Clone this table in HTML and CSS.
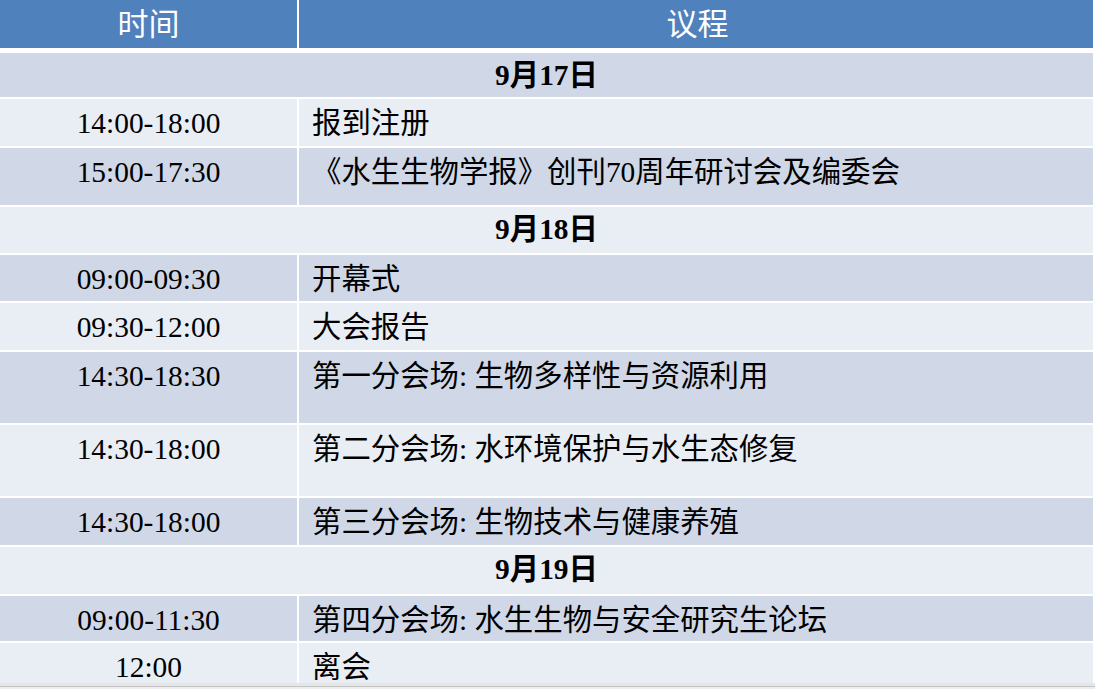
FILE: index.html
```html
<!DOCTYPE html>
<html lang="zh-CN">
<head>
<meta charset="utf-8">
<title>议程</title>
<link rel="stylesheet" href="styles.css">
</head>
<body>
<div class="agenda">
  <div class="row head">
    <div class="cell">时间</div>
    <div class="cell">议程</div>
  </div>
  <div class="row date dark h44"><div class="cell">9月17日</div></div>
  <div class="row light h47"><div class="cell time">14:00-18:00</div><div class="cell item">报到注册</div></div>
  <div class="row dark h57"><div class="cell time">15:00-17:30</div><div class="cell item">《水生生物学报》创刊70周年研讨会及编委会</div></div>
  <div class="row date light h46"><div class="cell">9月18日</div></div>
  <div class="row dark h46"><div class="cell time">09:00-09:30</div><div class="cell item">开幕式</div></div>
  <div class="row light h47"><div class="cell time">09:30-12:00</div><div class="cell item">大会报告</div></div>
  <div class="row dark h71"><div class="cell time">14:30-18:30</div><div class="cell item">第一分会场: 生物多样性与资源利用</div></div>
  <div class="row light h71"><div class="cell time">14:30-18:00</div><div class="cell item">第二分会场: 水环境保护与水生态修复</div></div>
  <div class="row dark h47"><div class="cell time">14:30-18:00</div><div class="cell item">第三分会场: 生物技术与健康养殖</div></div>
  <div class="row date light h47"><div class="cell">9月19日</div></div>
  <div class="row dark h45"><div class="cell time">09:00-11:30</div><div class="cell item">第四分会场: 水生生物与安全研究生论坛</div></div>
  <div class="row light h40"><div class="cell time">12:00</div><div class="cell item">离会</div></div>
</div>
<div class="strip"></div>
</body>
</html>
```

FILE: styles.css
```css
html, body {
  margin: 0;
  padding: 0;
  background: #ffffff;
}
body {
  width: 1095px;
  height: 689px;
  overflow: hidden;
  font-family: "Liberation Serif", "Noto Sans CJK SC", serif;
  font-size: 29.4px;
  color: #000;
}
.agenda {
  width: 1093px;
  height: 683px;
  display: flex;
  flex-direction: column;
  gap: 2px;
  overflow: hidden;
}
.row {
  display: grid;
  grid-template-columns: 297px 794px;
  column-gap: 2px;
  flex: none;
}
.row.date {
  grid-template-columns: 1093px;
}
.cell {
  line-height: 34px;
  padding-top: 6px;
  box-sizing: border-box;
  white-space: nowrap;
}
.head {
  height: 48px;
  margin-bottom: 3px;
}
.head .cell {
  background: #4f81bd;
  color: #ffffff;
  font-size: 31px;
  text-align: center;
  padding-top: 2px;
  line-height: 46px;
}
.head .cell:nth-child(2) {
  padding-left: 3px;
}
.dark .cell { background: #d0d8e8; }
.light .cell { background: #e9edf4; }
.date .cell {
  text-align: center;
  font-weight: bold;
  padding-top: 5px;
}
.time {
  text-align: center;
  padding-top: 7px;
}
.item {
  padding-left: 13px;
  padding-top: 7px;
}
.h40 { height: 40px; }
.h44 { height: 44px; }
.h45 { height: 45px; }
.h46 { height: 46px; }
.h47 { height: 47px; }
.h57 { height: 57px; }
.h71 { height: 71px; }
.strip {
  height: 6px;
  background: #e6e6e6;
  border-bottom: 2px solid #ededed;
  box-sizing: border-box;
  position: relative;
}
.strip::after {
  content: "";
  position: absolute;
  left: 0;
  right: 0;
  top: 3px;
  height: 1px;
  background: #c4c4c4;
}
```
